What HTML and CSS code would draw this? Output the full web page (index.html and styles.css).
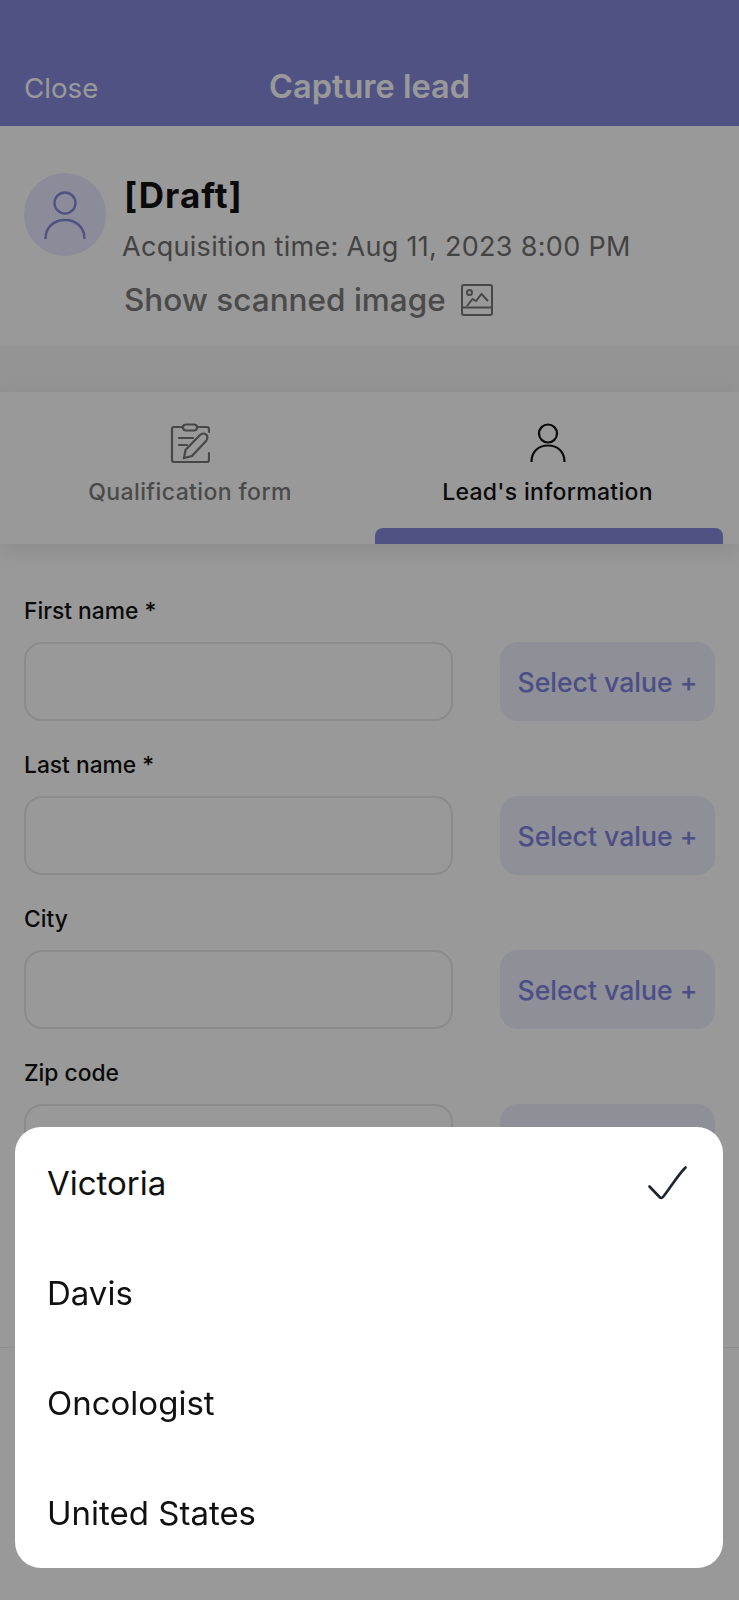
FILE: index.html
```html
<!DOCTYPE html>
<html lang="en">
<head>
    <meta charset="UTF-8">
    <meta name="viewport" content="width=device-width, initial-scale=1.0">
    <title>Capture lead</title>
    <link rel="stylesheet" href="styles.css">
</head>
<body>
    <div class="page">
        <div class="header">
            <span class="closeLink">Close</span>
            <span class="headerTitle">Capture lead</span>
        </div>

        <div class="leadCard">
            <div class="avatar">
                <svg width="42" height="66" viewBox="0 0 42 66" fill="none" stroke="#8589dc" stroke-width="2.4">
                    <ellipse cx="21" cy="12" rx="10.5" ry="10.5"/>
                    <path d="M1.5 48C1.5 36 10 29 21 29s19.500 7 19.500 19"/>
                </svg>
            </div>
            <div class="leadInfo">
                <div class="leadName">[Draft]</div>
                <div class="leadTime">Acquisition time: Aug 11, 2023 8:00 PM</div>
                <div class="scanLink">
                    <span>Show scanned image</span>
                    <svg width="32" height="32" viewBox="0 0 32 32" fill="none" stroke="#777" stroke-width="2">
                        <rect x="1" y="1" width="30" height="30" rx="2"/>
                        <path d="M1 23.500H31"/>
                        <circle cx="8.500" cy="8.500" r="2.500"/>
                        <path d="M6 22l5.500-7 3.500 2 5.500-7 6.500 7"/>
                    </svg>
                </div>
            </div>
        </div>

        <div class="strip"></div>

        <div class="tabs">
            <div class="tab tabLeft">
                <svg width="40" height="40" viewBox="0 0 40 40" fill="none" stroke="#777" stroke-width="2.200" stroke-linecap="round">
                    <path d="M13 4H4a2 2 0 0 0-2 2v31a2 2 0 0 0 2 2h33a2 2 0 0 0 2-2v-7M27 4h10a2 2 0 0 1 2 2v3"/>
                    <rect x="13" y="1.500" width="14" height="6" rx="3"/>
                    <path d="M9 15h14M9 22h8"/>
                    <path d="M14 35l1.500-8L30 12c2-2 5-2 6.500 0s1 4-.5 6L22 33z"/>
                </svg>
                <span>Qualification form</span>
            </div>
            <div class="tab active">
                <svg width="40" height="40" viewBox="0 0 40 40" fill="none" stroke="#111" stroke-width="2.200">
                    <circle cx="20" cy="10.500" r="9"/>
                    <path d="M3.500 39C3.500 29 10 22.500 20 22.500S36.500 29 36.500 39"/>
                </svg>
                <span>Lead's information</span>
            </div>
        </div>

        <div class="form">
            <div class="field">
                <label>First name *</label>
                <div class="fieldRow">
                    <div class="textBox"></div>
                    <div class="selectBtn">Select value +</div>
                </div>
            </div>
            <div class="field">
                <label>Last name *</label>
                <div class="fieldRow">
                    <div class="textBox"></div>
                    <div class="selectBtn">Select value +</div>
                </div>
            </div>
            <div class="field">
                <label>City</label>
                <div class="fieldRow">
                    <div class="textBox"></div>
                    <div class="selectBtn">Select value +</div>
                </div>
            </div>
            <div class="field">
                <label>Zip code</label>
                <div class="fieldRow">
                    <div class="textBox"></div>
                    <div class="selectBtn">Select value +</div>
                </div>
            </div>
        </div>

        <div class="footer"></div>
    </div>

    <div class="overlay">
        <div class="sheet">
            <div class="sheetRow">
                <span>Victoria</span>
                <svg width="39" height="34" viewBox="0 0 39 34" fill="none" stroke="#1c2430" stroke-width="2.600" stroke-linecap="round">
                    <path d="M1.500 20.500L11.500 31c1.200 1.200 2.500 1.200 3.500 0C21 24 29 10 37.500 1.500"/>
                </svg>
            </div>
            <div class="sheetRow"><span>Davis</span></div>
            <div class="sheetRow"><span>Oncologist</span></div>
            <div class="sheetRow"><span>United States</span></div>
        </div>
    </div>
</body>
</html>
```

FILE: styles.css
```css
* {
    box-sizing: border-box;
}
body {
    font-family: Inter, "Liberation Sans", sans-serif;
    background-color: white;
    color: #111;
    margin: 0;
}
.page {
    height: 1600px;
    display: flex;
    flex-direction: column;
    overflow: hidden;
}
.header {
    height: 126px;
    background-color: #8589dc;
    color: white;
    display: flex;
    align-items: flex-end;
    justify-content: center;
    position: relative;
    padding-bottom: 21px;
    flex-shrink: 0;
}
.headerTitle {
    font-size: 32.5px;
    font-weight: 600;
    line-height: 36px;
}
.closeLink {
    position: absolute;
    left: 24px;
    bottom: 20px;
    font-size: 27.7px;
    line-height: 36px;
}
.leadCard {
    height: 219px;
    flex-shrink: 0;
    display: flex;
    gap: 16px;
    padding: 47px 24px 0;
}
.avatar {
    width: 82px;
    height: 83px;
    border-radius: 50%;
    background-color: #e8e8ff;
    display: flex;
    justify-content: center;
    padding-top: 18px;
    flex-shrink: 0;
}
.leadInfo {
    display: flex;
    flex-direction: column;
    padding-top: 2px;
}
.leadName {
    font-size: 35px;
    font-weight: 700;
    line-height: 40px;
    margin-left: 2px;
    letter-spacing: 1px;
}
.leadTime {
    font-size: 27px;
    line-height: 34px;
    margin-top: 15px;
    color: #707070;
    letter-spacing: 0.3px;
}
.scanLink {
    display: flex;
    align-items: center;
    gap: 15px;
    margin-top: 18px;
    margin-left: 2px;
    font-size: 31.5px;
    line-height: 36px;
    color: #7c7c7c;
    font-weight: 500;
}
.strip {
    height: 47px;
    background-color: #f7f7f7;
    flex-shrink: 0;
}
.tabs {
    height: 152px;
    flex-shrink: 0;
    display: grid;
    grid-template-columns: 375px 348px;
    box-shadow: 0 6px 24px rgba(0, 0, 0, 0.1);
    position: relative;
}
.tab {
    display: flex;
    flex-direction: column;
    align-items: center;
    padding-top: 31px;
    gap: 14px;
    font-size: 23px;
    line-height: 30px;
    color: #7c7c7c;
    font-weight: 500;
    letter-spacing: 0.4px;
    position: relative;
}
.tabLeft {
    padding-left: 5px;
}
.tab.active {
    color: #111;
    letter-spacing: 0.3px;
    padding-right: 3px;
}
.tab.active::after {
    content: "";
    position: absolute;
    left: 0;
    right: 0;
    bottom: 0;
    height: 16px;
    background-color: #8589dc;
    border-radius: 8px 8px 0 0;
}
.form {
    flex: 1;
    padding: 50px 24px 0;
    display: flex;
    flex-direction: column;
    gap: 27px;
    overflow: hidden;
}
.field {
    display: flex;
    flex-direction: column;
    gap: 14px;
    flex-shrink: 0;
}
.field label {
    font-size: 22.8px;
    line-height: 34px;
    font-weight: 500;
    height: 34px;
}
.fieldRow {
    display: flex;
    justify-content: space-between;
}
.textBox {
    width: 429px;
    height: 79px;
    border: 2px solid #e8e8e8;
    border-radius: 18px;
}
.selectBtn {
    width: 215px;
    height: 79px;
    background-color: #eeeefd;
    color: #7f82e0;
    border-radius: 18px;
    display: flex;
    align-items: center;
    justify-content: center;
    font-size: 26.6px;
    font-weight: 500;
}
.footer {
    height: 253px;
    flex-shrink: 0;
    border-top: 1px solid #eee;
    background-color: white;
}
.overlay {
    position: fixed;
    top: 0;
    left: 0;
    right: 0;
    bottom: 0;
    background-color: rgba(0, 0, 0, 0.4);
    display: flex;
    align-items: flex-end;
    padding: 0 16px 32px 15px;
}
.sheet {
    width: 100%;
    height: 441px;
    background-color: white;
    border-radius: 26px;
    display: flex;
    flex-direction: column;
    padding: 1px 0 0;
}
.sheetRow {
    height: 110px;
    display: flex;
    align-items: center;
    justify-content: space-between;
    padding: 0 36px 0 32px;
    font-size: 33px;
    color: #111;
}
```
